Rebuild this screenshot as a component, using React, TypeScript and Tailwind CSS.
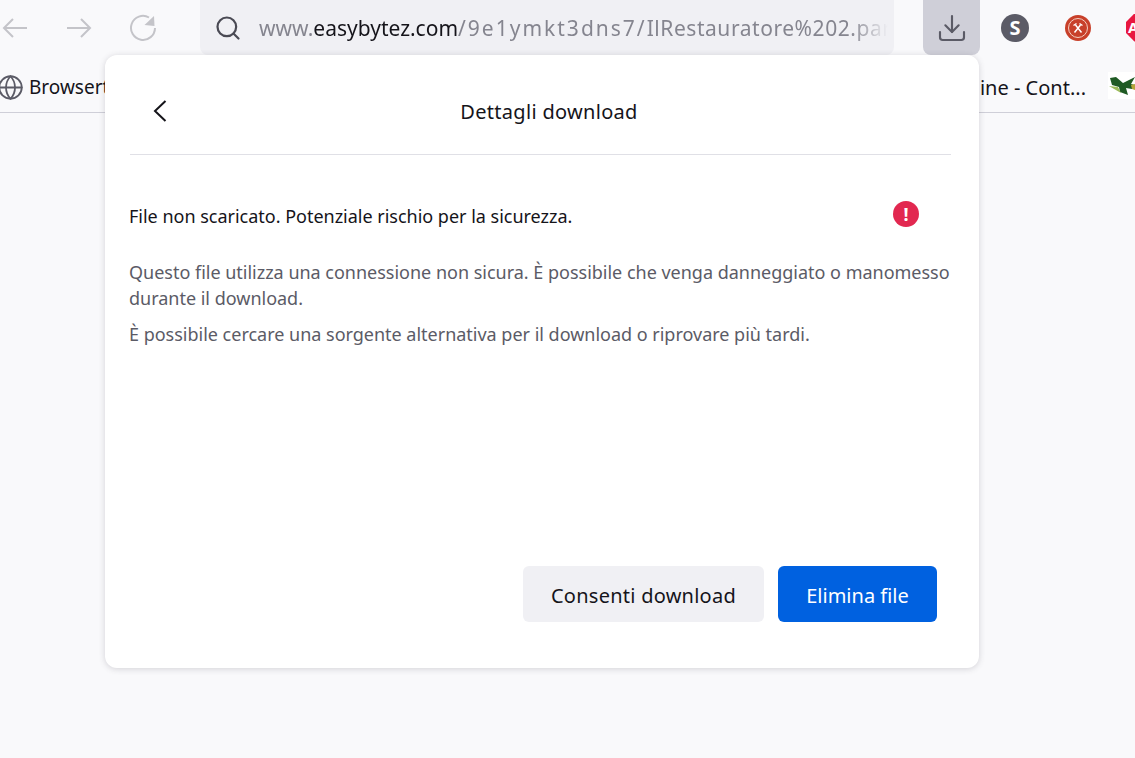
import { Download, Globe, Search } from "lucide-react";

const font = "font-['Noto_Sans',sans-serif]";

function NavButtons() {
  return (
    <div className="flex w-[200px] shrink-0 items-center text-[#c4c4c9]">
      <svg width="26" height="22" viewBox="0 0 26 22" fill="none" stroke="currentColor" strokeWidth="2" className="ml-[2px]">
        <path d="M25 11H2M11 2 2 11l9 9" />
      </svg>
      <svg width="26" height="22" viewBox="0 0 26 22" fill="none" stroke="currentColor" strokeWidth="2" className="ml-[38px]">
        <path d="M1 11h23M15 2l9 9-9 9" />
      </svg>
      <svg width="28" height="28" viewBox="0 0 28 28" fill="none" className="ml-[37px]">
        <path d="M20 3.5A12 12 0 1 0 26 14" stroke="currentColor" strokeWidth="2" />
        <path d="M25 2l.5 10-10-1z" fill="currentColor" />
      </svg>
    </div>
  );
}

function ToolbarExtensions() {
  return (
    <div className="flex items-center">
      <div className="ml-[21px] flex h-[28px] w-[28px] items-center justify-center rounded-full bg-[#5b5b66] text-[20px] font-bold leading-none text-white">
        S
      </div>
      <div className="ml-[36px] flex h-[26px] w-[26px] items-center justify-center rounded-full bg-[#c8402a]">
        <svg width="22" height="22" viewBox="0 0 22 22" fill="none">
          <circle cx="11" cy="11" r="9.5" stroke="#f3cfc2" strokeWidth="1" />
          <path d="M7.5 15.5 13.5 8M14.5 15.5 8.5 8" stroke="#fff" strokeWidth="1.5" />
          <path d="M6.5 8.5 9.5 6.5M15.5 8.5 12.5 6.5" stroke="#fff" strokeWidth="1.5" />
        </svg>
      </div>
      <div className="ml-[35px] flex h-[28px] w-[28px] shrink-0 items-center bg-[#e8173f] pl-[2px] text-[15px] font-bold text-white [clip-path:polygon(30%_0,70%_0,100%_30%,100%_70%,70%_100%,30%_100%,0_70%,0_30%)]">
        A
      </div>
    </div>
  );
}

export default function App() {
  return (
    <div className={`relative h-[758px] w-[1135px] overflow-hidden bg-[#f9f9fb] ${font}`}>
      <div className="flex h-[55px] items-center">
        <NavButtons />
        <div className="flex h-[55px] w-[694px] shrink-0 items-center rounded-b-[8px] bg-[#f0f0f4] pl-[14px] pr-[6px]">
          <Search size={28} strokeWidth={1.9} className="shrink-0 text-[#4a4a54]" />
          <div className="ml-[17px] overflow-hidden whitespace-nowrap pt-[3px] text-[21px] text-[#85858f] [mask-image:linear-gradient(to_right,black_94%,transparent)]">
            www.<span className="text-[#15141a]">easybytez.com</span>
            <span className="tracking-[2px]">/9e1ymkt3dns7/</span>
            <span className="tracking-[0.55px]">IlRestauratore%202.part1.rar</span>
          </div>
        </div>
        <div className="ml-[29px] flex h-[55px] w-[57px] shrink-0 items-center justify-center rounded-b-[8px] bg-[#cfcfd8]">
          <Download size={32} strokeWidth={1.6} className="text-[#5b5b66]" />
        </div>
        <ToolbarExtensions />
      </div>
      <div className="flex h-[58px] items-center justify-between border-b border-[#cfcfd8] pt-[8px]">
        <div className="flex items-center">
          <Globe size={27} strokeWidth={1.6} className="-ml-[3px] text-[#5b5b66]" />
          <span className="ml-[5px] whitespace-nowrap text-[19px] text-[#15141a]">Browsertools</span>
        </div>
        <div className="flex items-center">
          <span className="whitespace-nowrap text-[20px] text-[#15141a]">Online - Cont...</span>
          <svg width="27" height="27" viewBox="0 0 27 27" className="-mt-[4px] ml-[22px] bg-white">
            <g className="blur-[0.6px]">
              <path d="M2 6 8 5 15 11 27 5 23 12 27 13 24 17 18 16 20 23 12 20 11 15 4 13Z" fill="#1f5a24" />
              <path d="M1 14 10 15 13 21Z" fill="#9bbb5a" />
              <path d="M23 13 27 12V18L24 17Z" fill="#b5a53a" />
            </g>
          </svg>
        </div>
      </div>

      <div className="absolute left-[105px] top-[55px] flex h-[613px] w-[874px] flex-col rounded-[12px] bg-white shadow-[0_1px_6px_rgba(58,57,68,0.2)]">
        <div className="ml-[25px] mr-[28px] flex h-[100px] shrink-0 items-center border-b border-[#e0e0e6] pt-[12px]">
          <svg width="14" height="22" viewBox="0 0 14 22" fill="none" stroke="#15141a" strokeWidth="2" className="ml-[23px] shrink-0">
            <path d="M12.5 1 2 11l10.5 10" />
          </svg>
          <div className="mr-[20px] flex-1 pt-[3px] text-center text-[20px] tracking-[0.3px] text-[#15141a]">Dettagli download</div>
        </div>
        <div className="ml-[24px] mr-[28px] mt-[48px] flex items-start justify-between">
          <div className="text-[18px] leading-[26px] tracking-[-0.01px] text-[#15141a]">
            File non scaricato. Potenziale rischio per la sicurezza.
          </div>
          <div className="-mt-[2px] mr-[32px] flex h-[26px] w-[26px] items-center justify-center rounded-full bg-[#e22850] text-[18px] font-bold leading-none text-white">
            !
          </div>
        </div>
        <div className="ml-[24px] mr-[25px] mt-[30px] text-[18px] leading-[26px] tracking-[-0.01px] text-[#5b5b66]">
          <p>Questo file utilizza una connessione non sicura. È possibile che venga danneggiato o manomesso durante il download.</p>
          <p className="mt-[10px]">È possibile cercare una sorgente alternativa per il download o riprovare più tardi.</p>
        </div>
        <div className="mb-[46px] mr-[42px] mt-auto flex justify-end gap-[14px]">
          <button className="h-[56px] w-[241px] rounded-[6px] bg-[#f0f0f4] pt-[3px] text-[20px] tracking-[0.25px] text-[#15141a]">Consenti download</button>
          <button className="h-[56px] w-[159px] rounded-[6px] bg-[#0061e0] pt-[3px] text-[20px] text-white">Elimina file</button>
        </div>
      </div>
    </div>
  );
}
